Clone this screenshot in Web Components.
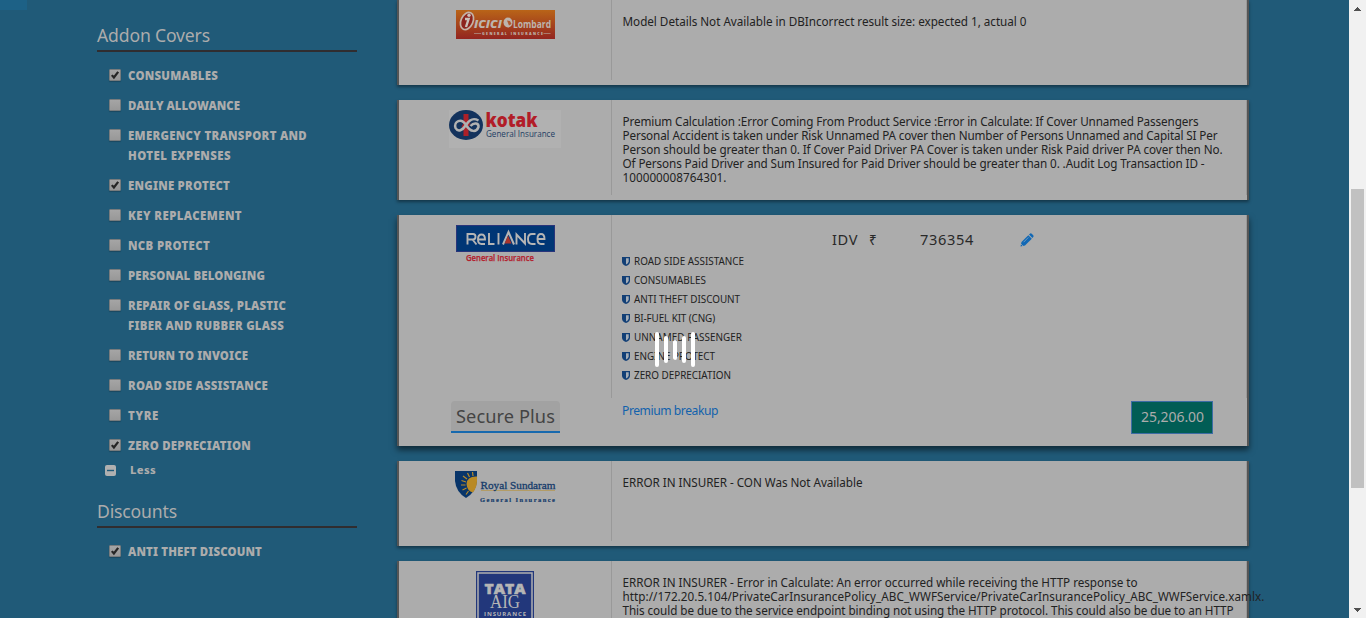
<!DOCTYPE html>
<html lang="en"><head><meta charset="utf-8"><title>Insurance quotes</title>
<style>html,body{margin:0;height:618px;overflow:hidden;background:#205a78}</style></head>
<body><quote-page></quote-page>
<script>
const define = (name, html, init) => {
  const tpl = document.createElement('template');
  tpl.innerHTML = html;
  customElements.define(name, class extends HTMLElement {
    constructor() { super(); this.attachShadow({mode:'open'}).append(tpl.content.cloneNode(true)); }
    connectedCallback() { if (init) init(this, this.shadowRoot); }
  });
};

/* One line of text whose tracking is tuned to a given width. */
define('fit-text', `<style>:host{display:block;white-space:pre}span{display:inline-block}</style><span><slot></slot></span>`, (el, root) => {
  const w = +el.getAttribute('w'), span = root.querySelector('span'), n = el.textContent.length;
  const nat = span.getBoundingClientRect().width;
  if (w && nat) span.style.letterSpacing = ((w - nat) / n) + 'px';
});

define('check-row', `<style>
:host{display:flex;gap:7px;padding-left:12px;font:900 11.4px/20px "Noto Sans",sans-serif;color:#acacac}
i{box-sizing:border-box;width:12px;height:12px;margin-top:3px;border:1px solid #777b7d;border-radius:1px;background:linear-gradient(#a5a5a5,#989898);display:flex;flex:none;box-shadow:0 1px 1px #0003}
svg{display:none;width:10px;height:10px}:host([checked]) svg{display:block}</style>
<i><svg viewBox="0 0 10 10"><path d="M1.8 5.1 3.9 7.5 8.2 1.8" fill="none" stroke="#262626" stroke-width="2.2"/></svg></i><div><slot></slot></div>`);

define('side-heading', `<style>:host{display:block;box-sizing:border-box;height:30px;border-bottom:2px solid #302d30;font:400 17.6px/24px "Noto Sans",sans-serif;color:#acacac;padding-top:1px}</style><slot></slot>`);

define('side-filters', `<style>
:host{display:block;width:260px;padding:22px 0 0 97px}
.list{display:flex;flex-direction:column;gap:10px;margin-top:14px}
.less{display:flex;align-items:center;gap:14px;padding-left:8px;height:20px;margin-top:4px;font:800 11.2px/20px "Noto Sans",sans-serif;color:#acacac}
.d{margin-top:18px}</style>
<side-heading><fit-text w="113">Addon Covers</fit-text></side-heading>
<div class="list">
<check-row checked><fit-text w="90">CONSUMABLES</fit-text></check-row>
<check-row><fit-text w="112">DAILY ALLOWANCE</fit-text></check-row>
<check-row><fit-text w="179">EMERGENCY TRANSPORT AND</fit-text><fit-text w="103">HOTEL EXPENSES</fit-text></check-row>
<check-row checked><fit-text w="102">ENGINE PROTECT</fit-text></check-row>
<check-row><fit-text w="114">KEY REPLACEMENT</fit-text></check-row>
<check-row><fit-text w="82">NCB PROTECT</fit-text></check-row>
<check-row><fit-text w="137">PERSONAL BELONGING</fit-text></check-row>
<check-row><fit-text w="158">REPAIR OF GLASS, PLASTIC</fit-text><fit-text w="156">FIBER AND RUBBER GLASS</fit-text></check-row>
<check-row><fit-text w="120">RETURN TO INVOICE</fit-text></check-row>
<check-row><fit-text w="140">ROAD SIDE ASSISTANCE</fit-text></check-row>
<check-row><fit-text w="31">TYRE</fit-text></check-row>
<check-row checked><fit-text w="123">ZERO DEPRECIATION</fit-text></check-row>
</div>
<div class="less"><svg width="11" height="11"><rect width="11" height="11" rx="2" fill="#b0b0b0"/><path d="M2 5.5h7" stroke="#205a78" stroke-width="1.4"/></svg><fit-text w="26">Less</fit-text></div>
<div class="d"><side-heading><fit-text w="80">Discounts</fit-text></side-heading></div>
<div class="list"><check-row checked><fit-text w="134">ANTI THEFT DISCOUNT</fit-text></check-row></div>`);

define('quote-card', `<style>
:host{display:grid;grid-template-columns:213px 1fr;box-sizing:border-box;width:852px;border:solid #555;border-width:0 2px;background:#acacac;box-shadow:0 2px 3px #0006;font:400 11.7px/14px "Noto Sans",sans-serif;color:#222;padding-bottom:5px}
.logo{display:flex;flex-direction:column;align-items:center;box-sizing:border-box;padding:10px 0 0;border-right:1px solid #999}
.body{padding:14px 0 0 10.5px;border-right:1px solid #999;min-width:0}
:host([tall]){padding:0;box-shadow:0 4px 6px #0008;grid-template-rows:183px 1fr}
:host([tall]) .body{padding:0 0 0 10px}
.foot{display:none}:host([tall]) .foot{display:block}
::slotted(svg){display:block}</style>
<div class="logo"><slot name="logo"></slot></div><div class="body"><slot></slot></div>
<div class="foot"><slot name="plan"></slot></div><div class="foot"><slot name="actions"></slot></div>`);

define('cover-item', `<style>:host{display:flex;align-items:center;gap:4px;height:19px;font:400 9.9px/19px "Noto Sans",sans-serif;color:#222}</style>
<svg width="8" height="9" viewBox="0 0 8 9"><path d="M0 0h8v4.5Q8 7.5 4 9Q0 7.5 0 4.5Z" fill="#123f76"/><path d="M4 1.3h2.7v3.2Q6.5 6.3 4 7.6Z" fill="#a4adb7"/></svg><slot></slot>`);

define('plan-name', `<style>:host{display:block;box-sizing:border-box;width:109px;height:32px;margin:3px 0 0 52px;padding-left:5px;border-bottom:2px solid #1769ae;border-radius:4px 4px 0 0;background:#a2a2a2;font:400 18.2px/30px "Noto Sans",sans-serif;color:#444}</style><slot></slot>`);

define('price-row', `<style>:host{display:flex;justify-content:space-between;align-items:flex-start;padding:3px 34px 0 10px}
.link{font:400 12.1px/20px "Noto Sans",sans-serif;color:#1262ac}
.price{box-sizing:border-box;width:82px;height:33px;padding-left:9px;border:1px solid #3d6ca5;background:#015d55;font:400 14px/30px "Noto Sans",sans-serif;color:#acacac}</style>
<fit-text class="link" w="96">Premium breakup</fit-text><div class="price"><fit-text w="63">25,206.00</fit-text></div>`);

define('idv-row', `<style>:host{display:grid;grid-template-columns:37px 51px 100px auto;align-items:center;height:24px;padding:13px 0 0 210px;font:400 14.6px/24px "Noto Sans",sans-serif;color:#292929}fit-text{margin-top:-2px}.r{font-size:13.5px}</style>
<fit-text w="26">IDV</fit-text><span class="r">₹</span><fit-text w="54">736354</fit-text>
<svg width="14" height="14" viewBox="0 0 14 14"><path d="M.5 13.5 1.5 9 8.3 2.2 11.8 5.7 5 12.5Z" fill="#1168b5"/><path d="M9 1.5 10.2.5Q11 0 12 .9L13.2 2.2Q14 3 13.4 3.8L12.4 5Z" fill="#1168b5"/><path d="M3.6 9.2 8.4 4.4" stroke="#83a2bd" stroke-width=".8"/><path d="m1.2 11.2 1.6 1.6" stroke="#acacac" stroke-width=".9"/></svg>`);

define('page-scrollbar', `<style>:host{display:flex;flex-direction:column;align-items:center;width:17px;height:618px;background:#f1f1f1}
svg{flex:none}.track{flex:1;width:13px;padding-top:172px;box-sizing:border-box}.thumb{height:299px;background:#c1c1c1}</style>
<svg width="17" height="17"><path d="M5 11h7v-1h-1v-1h-1v-1h-1v-1h-1v1h-1v1h-1v1h-1z" fill="#505050"/></svg><div class="track"><div class="thumb"></div></div>
<svg width="17" height="17"><path d="M5 7h7v1h-1v1h-1v1h-1v1h-1v-1h-1v-1h-1v-1h-1z" fill="#505050"/></svg>`);

define('loading-bars', `<style>:host{position:absolute;left:655px;top:332px;display:flex;align-items:center;gap:5px;height:35px}i{width:4px;height:35px;border-radius:2px;background:#fff}i:nth-of-type(2n){height:27px}i:nth-of-type(3){height:20px}</style><i></i><i></i><i></i><i></i><i></i>`);

define('quote-page', `<style>
:host{display:grid;grid-template-columns:397px 852px 1fr 17px;height:618px;overflow:hidden;position:relative;background:#205a78}
.patch{position:absolute;left:0;top:0;width:27px;height:10px;background:#1d6186}
main{display:flex;flex-direction:column;gap:15px}
quote-card{flex:none}
page-scrollbar{grid-column:4}
side-filters{min-width:0}</style>
<div class="patch"></div><side-filters></side-filters>
<main>
<quote-card style="height:85px">
<svg slot="logo" width="99" height="29" style="margin-left:1px"><defs><linearGradient id="g" x2="0" y2="1"><stop stop-color="#b96418"/><stop offset="1" stop-color="#932520"/></linearGradient></defs><rect width="99" height="29" fill="url(#g)"/><ellipse cx="11" cy="11" rx="6" ry="9" transform="rotate(24 11 11)" fill="#8d241d" stroke="#c4b3a7" stroke-width="1.7"/><circle cx="13" cy="5.3" r="1.7" fill="#c9c0b8"/><path d="M9 9h3.600L10 17" fill="none" stroke="#c9c0b8" stroke-width="2.4"/><g fill="#bdb4ad" font-family="Open Sans,sans-serif"><text x="18" y="18" font-size="10" font-style="italic" font-weight="800" textLength="28" lengthAdjust="spacingAndGlyphs">ICICI</text><text x="57" y="18" font-size="10" font-weight="700" textLength="38" lengthAdjust="spacingAndGlyphs">Lombard</text><text x="26" y="24.500" font-size="3.600" font-weight="800" textLength="61">GENERAL INSURANCE</text></g><ellipse cx="52" cy="12.500" rx="4.500" ry="5" fill="#bdb4ad"/><path d="M51 10.500l3 .5 1.500 3-2.500 1.500z" fill="#b05a30"/><path d="M18 23.500h7M87.500 23.500h7" stroke="#b59b90" stroke-width=".7"/></svg>
<fit-text w="404">Model Details Not Available in DBIncorrect result size: expected 1, actual 0</fit-text></quote-card>
<quote-card style="height:100px">
<svg slot="logo" width="112" height="38"><rect width="112" height="38" fill="#b1b1b1"/><ellipse cx="17" cy="15" rx="17" ry="15" fill="#14335d"/><path d="M19.5 4h-5v9l-2 4 2 1v8h5v-9l2-4-2-1z" fill="#ad2028"/><path d="M29.500 10.500C24 7.500 20.500 9.500 17 15S9 22.500 6.500 18C4.500 11 12.500 7.500 17 15S27.500 22.500 29.500 17C30 13 25 12 21.500 16" fill="none" stroke="#b1b1b1" stroke-width="2.500"/><text x="36.5" y="17" font-family="Open Sans,sans-serif" font-size="18.500" font-weight="800" fill="#b21d28" textLength="52" lengthAdjust="spacingAndGlyphs">kotak</text><text x="37" y="27" font-family="Open Sans,sans-serif" font-size="9.500" fill="#233d63" textLength="69" lengthAdjust="spacingAndGlyphs">General Insurance</text></svg>
<fit-text w="576">Premium Calculation :Error Coming From Product Service :Error in Calculate: If Cover Unnamed Passengers</fit-text><fit-text w="595">Personal Accident is taken under Risk Unnamed PA cover then Number of Persons Unnamed and Capital SI Per</fit-text><fit-text w="600">Person should be greater than 0. If Cover Paid Driver PA Cover is taken under Risk Paid driver PA cover then No.</fit-text><fit-text w="582">Of Persons Paid Driver and Sum Insured for Paid Driver should be greater than 0. .Audit Log Transaction ID -</fit-text><fit-text w="104">100000008764301.</fit-text></quote-card>
<quote-card tall style="height:231px">
<svg slot="logo" width="99" height="38" style="margin-left:1px"><rect x=".5" y=".5" width="98" height="26" fill="#003675" stroke="#29347a"/><g fill="none" stroke="#b5b5b5" stroke-width="1.900"><path d="M11.5 19.500V9h5.5q2.5 0 2.5 2.7T17 14.5h-4.500M16.500 14.500 20.500 19.500"/><path d="M22.500 14.500h6.500q0-5-3.500-5t-3.500 5q0 4.500 3.500 4.500H29M33 8v11h5.500M42.500 8v11.500M60.500 19.500V9.500L69 18.500V8M79.500 9h-3.500q-4 0-4 5t4 5H79.500M82 14h6.500q0-5-3.500-5t-3.500 5q0 5 3.500 5h3.500"/></g><path d="M47 19.500 52.500 7 58 19.500" fill="none" stroke="#b5b5b5" stroke-width="2"/><path d="M52 10.500 55.500 18.500h-7z" fill="#a9352c"/><text x="10" y="36" font-family="Open Sans,sans-serif" font-size="9" font-weight="600" fill="#b3202d" stroke="#b3202d" stroke-width=".25" textLength="68" lengthAdjust="spacingAndGlyphs">General Insurance</text></svg>
<idv-row></idv-row>
<cover-item><fit-text w="110">ROAD SIDE ASSISTANCE</fit-text></cover-item>
<cover-item><fit-text w="72">CONSUMABLES</fit-text></cover-item>
<cover-item><fit-text w="106">ANTI THEFT DISCOUNT</fit-text></cover-item>
<cover-item><fit-text w="81">BI-FUEL KIT (CNG)</fit-text></cover-item>
<cover-item><fit-text w="108">UNNAMED PASSENGER</fit-text></cover-item>
<cover-item><fit-text w="81">ENGINE PROTECT</fit-text></cover-item>
<cover-item><fit-text w="97">ZERO DEPRECIATION</fit-text></cover-item>
<plan-name slot="plan"><fit-text w="99">Secure Plus</fit-text></plan-name><price-row slot="actions"></price-row></quote-card>
<quote-card style="height:85px">
<svg slot="logo" width="101" height="32" style="margin-left:1px"><path d="M0 0h22v10Q21 21 11 27Q1 21 0 10Z" fill="#08356a"/><g fill="none" stroke="#b98a25"><path d="M12 8 8 5M11 11 6.500 9.500M10.500 14H6M11.500 17 7.500 19M13.500 20 11 23.500M14.500 6 12.500 2M18 5 17.500 1" stroke-width="1.200"/></g><path d="M22 5.500Q12 5 11.500 13Q12 20 18 21.500Q22 16 22 10Z" fill="#b98a25"/><path d="M26 19.500h74" stroke="#b39c66"/><text x="25.500" y="18" font-family="Liberation Serif,serif" font-size="10.500" fill="#173c6b" stroke="#173c6b" stroke-width=".3" textLength="75" lengthAdjust="spacingAndGlyphs">Royal Sundaram</text><text x="25" y="31" font-family="Liberation Serif,serif" font-size="6.500" font-weight="700" fill="#173c6b" stroke="#173c6b" stroke-width=".2" textLength="75">General Insurance</text></svg>
<fit-text w="240">ERROR IN INSURER - CON Was Not Available</fit-text></quote-card>
<quote-card style="height:100px">
<svg slot="logo" width="58" height="58"><rect width="58" height="58" fill="#22377b"/><rect x="2" y="2" width="54" height="54" fill="none" stroke="#b0b0b0" stroke-width="1.500"/><g fill="#b5b5b5"><text x="8.500" y="22.500" font-family="Open Sans,sans-serif" font-size="14" font-weight="800" stroke="#b5b5b5" stroke-width=".5" textLength="41" lengthAdjust="spacingAndGlyphs">TATA</text><text x="14" y="37" font-family="Liberation Serif,serif" font-size="18" textLength="30" lengthAdjust="spacingAndGlyphs">AIG</text><text x="8" y="44.500" font-family="Open Sans,sans-serif" font-size="6" font-weight="700" textLength="42">INSURANCE</text></g></svg>
<fit-text w="515">ERROR IN INSURER - Error in Calculate: An error occurred while receiving the HTTP response to</fit-text><fit-text w="642">http://172.20.5.104/PrivateCarInsurancePolicy_ABC_WWFService/PrivateCarInsurancePolicy_ABC_WWFService.xamlx.</fit-text><fit-text w="611">This could be due to the service endpoint binding not using the HTTP protocol. This could also be due to an HTTP</fit-text></quote-card>
</main><page-scrollbar></page-scrollbar><loading-bars></loading-bars>`);
</script></body></html>
